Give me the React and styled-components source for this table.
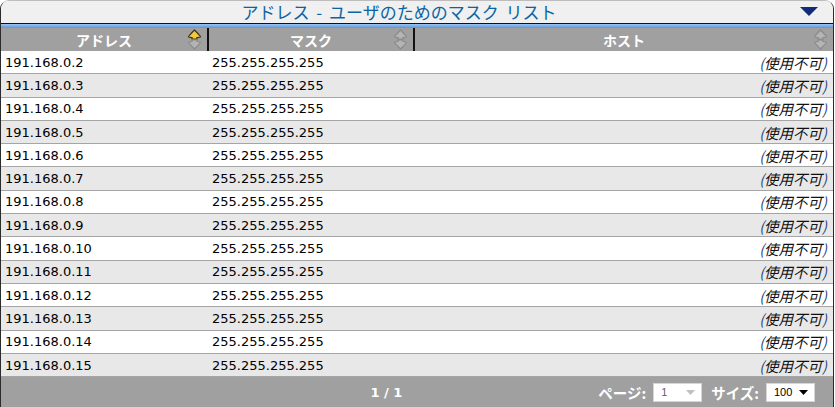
import React from "react";
import styled, { createGlobalStyle } from "styled-components";

const GlobalStyle = createGlobalStyle`
    body {
        margin: 0;
        background: #ffffff;
        font-family: "DejaVu Sans", "Noto Sans CJK JP", sans-serif;
    }
`;

const Panel = styled.div`
    width: 832px;
    border: 1px solid #2b2b2b;
    border-top-color: #bdbdbd;
    border-radius: 9px 9px 0 0;
    overflow: hidden;
    background: #ffffff;
`;

const TitleBar = styled.div`
    position: relative;
    height: 22px;
    display: flex;
    align-items: center;
    justify-content: center;
    padding-right: 36px;
    background: #f0f0f0;
    color: #0a64a4;
    font-family: "Noto Sans CJK JP", sans-serif;
    font-size: 17px;
    word-spacing: 3px;
    line-height: 22px;
    border-bottom: 1px solid #111111;
`;

const Collapse = styled.svg`
    position: absolute;
    right: 15px;
    top: 6px;
`;

const BlueStrip = styled.div`
    height: 4px;
    background: linear-gradient(#9cc4f0, #5b97dc);
`;

const Table = styled.table`
    width: 100%;
    border-collapse: collapse;
    table-layout: fixed;
    font-size: 13px;
`;

const HeadCell = styled.th`
    position: relative;
    height: 23px;
    padding: 0;
    background: #a0a0a0;
    color: #ffffff;
    font-family: "DejaVu Sans", "Noto Sans CJK JP", sans-serif;
    font-weight: bold;
    font-size: 14px;
    text-align: center;
    border-right: ${(p) => (p.$last ? "none" : "2px solid #111111")};
`;

const SortIcon = styled.svg`
    position: absolute;
    right: 5px;
    top: 1px;
`;

const Row = styled.tr`
    background: ${(p) => (p.$alt ? "#e8e8e8" : "#ffffff")};
    border-bottom: 1px solid #a5a5a5;
`;

const Cell = styled.td`
    height: 22.3px;
    padding: 0 ${(p) => (p.$align === "right" ? "6px" : "4px")} 0 4px;
    color: #000000;
    text-align: ${(p) => p.$align || "left"};
    white-space: nowrap;
`;

const Unavailable = styled.span`
    font-style: italic;
    font-family: "Noto Sans CJK JP", sans-serif;
    font-size: 14.5px;
    color: #111111;
`;

const Paren = styled.span`
    color: #2a3f7a;
`;

const Footer = styled.div`
    height: 30px;
    display: flex;
    align-items: center;
    justify-content: flex-end;
    background: #a0a0a0;
    color: #ffffff;
    font-weight: bold;
    font-size: 13px;
    padding-right: 18px;
`;

const Pages = styled.span`
    margin-right: 196px;
    font-family: "DejaVu Sans", sans-serif;
`;

const Label = styled.span`
    font-family: "Noto Sans CJK JP", sans-serif;
    font-size: 14.5px;
    margin-right: 7px;
`;

const Select = styled.div`
    width: 49px;
    height: 19px;
    display: flex;
    align-items: center;
    justify-content: space-between;
    padding: 0 6px 0 7px;
    box-sizing: border-box;
    margin-right: ${(p) => (p.$gap ? "9px" : "0")};
    background: #ffffff;
    border: 1px solid #d6d6d6;
    color: ${(p) => (p.$disabled ? "#6a5a6a" : "#000000")};
    font-family: "Liberation Sans", sans-serif;
    font-weight: normal;
    font-size: 11px;
`;

const rows = Array.from({ length: 14 }, (_, i) => `191.168.0.${i + 2}`);

function Sort({ active }) {
    const up = active ? "#f4c838" : "#b4b4b4";
    const upStroke = active ? "#3c3418" : "#8a8a8a";
    return (
        <SortIcon width="15" height="21" viewBox="0 0 15 21">
            <path
                d="M7.5 1 C9 2.5 11.5 5 13.5 7.5 C13.5 8.5 12.5 8.5 10 8.5 L10 10 L5 10 L5 8.5 C2.5 8.5 1.5 8.5 1.5 7.5 C3.5 5 6 2.5 7.5 1 Z"
                fill={up}
                stroke={upStroke}
                strokeWidth="1.2"
            />
            <path
                d="M5 11 L10 11 L10 12.5 C12.5 12.5 13.5 12.5 13.5 13.5 C11.5 16 9 18.5 7.5 20 C6 18.5 3.5 16 1.5 13.5 C1.5 12.5 2.5 12.5 5 12.5 Z"
                fill="#b4b4b4"
                stroke="#8a8a8a"
                strokeWidth="1.2"
            />
        </SortIcon>
    );
}

function Caret({ color }) {
    return (
        <svg width="9" height="5" viewBox="0 0 9 5">
            <path d="M0 0 L9 0 L4.5 5 Z" fill={color} />
        </svg>
    );
}

export default function App() {
    return (
        <>
            <GlobalStyle />
            <Panel>
                <TitleBar>
                    アドレス - ユーザのためのマスク リスト
                    <Collapse width="18" height="9" viewBox="0 0 18 9">
                        <path d="M0 0 L18 0 L9 9 Z" fill="#122a78" />
                    </Collapse>
                </TitleBar>
                <BlueStrip />
                <Table>
                    <colgroup>
                        <col style={{ width: "207px" }} />
                        <col style={{ width: "206px" }} />
                        <col />
                    </colgroup>
                    <thead>
                        <tr>
                            <HeadCell>
                                アドレス
                                <Sort active />
                            </HeadCell>
                            <HeadCell>
                                マスク
                                <Sort />
                            </HeadCell>
                            <HeadCell $last>
                                ホスト
                                <Sort />
                            </HeadCell>
                        </tr>
                    </thead>
                    <tbody>
                        {rows.map((ip, i) => (
                            <Row key={ip} $alt={i % 2 === 1}>
                                <Cell>{ip}</Cell>
                                <Cell>255.255.255.255</Cell>
                                <Cell $align="right">
                                    <Unavailable>
                                        <Paren>(</Paren>使用不可<Paren>)</Paren>
                                    </Unavailable>
                                </Cell>
                            </Row>
                        ))}
                    </tbody>
                </Table>
                <Footer>
                    <Pages>1 / 1</Pages>
                    <Label>ページ:</Label>
                    <Select $disabled $gap>
                        1
                        <Caret color="#c0c0c0" />
                    </Select>
                    <Label>サイズ:</Label>
                    <Select>
                        100
                        <Caret color="#000000" />
                    </Select>
                </Footer>
            </Panel>
        </>
    );
}
